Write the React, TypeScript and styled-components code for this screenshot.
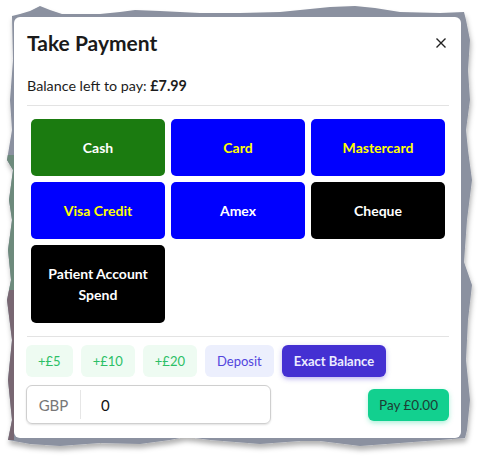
import styled, { createGlobalStyle } from "styled-components";

const GlobalStyle = createGlobalStyle`
  html, body {
    margin: 0;
    padding: 0;
    background: #ffffff;
  }
  body {
    font-family: "Lato", "Noto Sans", sans-serif;
    color: #1c1c1c;
  }
`;

const Page = styled.div`
  position: relative;
  width: 480px;
  height: 456px;
  overflow: hidden;
  padding: 17px 0 0 14px;
  box-sizing: border-box;
`;

const Backdrop = styled.svg`
  position: absolute;
  top: 0;
  left: 0;
`;

const Modal = styled.section`
  position: relative;
  width: 447px;
  height: 421px;
  background: #ffffff;
  border-radius: 6px;
  display: flex;
  flex-direction: column;
`;

const Header = styled.header`
  height: 52px;
  padding: 0 15px 0 13px;
  display: flex;
  align-items: center;
  justify-content: space-between;
`;

const Title = styled.h2`
  margin: 0;
  font-size: 21px;
  font-weight: 700;
  line-height: 24px;
  color: #1a1a1a;
`;

const CloseButton = styled.button`
  border: none;
  background: none;
  padding: 0;
  width: 10px;
  height: 10px;
  display: flex;
  cursor: pointer;
`;

const Body = styled.div`
  padding: 0 12px 0 13px;
`;

const Balance = styled.p`
  margin: 7px 0 0;
  font-size: 14.3px;
  line-height: 20px;

  strong {
    font-weight: 700;
  }
`;

const Divider = styled.hr<{ $gap: number }>`
  margin: ${(p) => p.$gap}px 0 0;
  border: none;
  border-top: 1px solid #e3e3e3;
`;

const MethodGrid = styled.div`
  margin: 13px 4px 0;
  display: grid;
  grid-template-columns: repeat(3, 1fr);
  gap: 6px;
`;

const MethodButton = styled.button<{ $bg: string; $fg: string }>`
  border: none;
  border-radius: 5px;
  padding: 18px 8px;
  line-height: 21px;
  font-family: inherit;
  font-size: 14px;
  font-weight: 700;
  background: ${(p) => p.$bg};
  color: ${(p) => p.$fg};
  cursor: pointer;
`;

const QuickRow = styled.div`
  margin: 8px 0 0 -1px;
  display: flex;
  gap: 8px;
`;

const quickTones = {
  green: { bg: "#eefbf2", fg: "#2cbf66", weight: 400, shadow: "none" },
  soft: { bg: "#eceffd", fg: "#5245dd", weight: 400, shadow: "none" },
  solid: {
    bg: "#4430d2",
    fg: "#ececff",
    weight: 700,
    shadow: "0 2px 5px rgba(68, 48, 210, 0.35)",
  },
};

const QuickButton = styled.button<{ $tone: keyof typeof quickTones }>`
  height: 32px;
  padding: 0 12px;
  border: none;
  border-radius: 6px;
  font-family: inherit;
  font-size: 13px;
  font-weight: ${(p) => quickTones[p.$tone].weight};
  background: ${(p) => quickTones[p.$tone].bg};
  color: ${(p) => quickTones[p.$tone].fg};
  box-shadow: ${(p) => quickTones[p.$tone].shadow};
  cursor: pointer;
`;

const Footer = styled.div`
  margin: 8px 0 0 -1px;
  display: flex;
  align-items: center;
  justify-content: space-between;
`;

const InputGroup = styled.label`
  width: 245px;
  height: 39px;
  box-sizing: border-box;
  border: 1px solid #cfcfcf;
  border-radius: 6px;
  box-shadow: 0 1px 2px rgba(0, 0, 0, 0.12);
  display: flex;
  align-items: stretch;
`;

const Addon = styled.span`
  width: 53px;
  margin: 4px 0;
  border-right: 1px solid #e6e6e6;
  display: flex;
  align-items: center;
  justify-content: center;
  font-size: 15px;
  color: #777777;
`;

const AmountInput = styled.input`
  flex: 1;
  min-width: 0;
  border: none;
  outline: none;
  background: transparent;
  padding: 0 0 0 20px;
  font-family: inherit;
  font-size: 15px;
  color: #111111;
`;

const PayButton = styled.button`
  height: 32px;
  width: 81px;
  padding: 0;
  border: none;
  border-radius: 6px;
  background: #12d08f;
  color: #1d3d34;
  font-family: inherit;
  font-size: 13.5px;
  box-shadow: 0 2px 5px rgba(18, 208, 143, 0.35);
  cursor: pointer;
`;

const methods = [
  { label: "Cash", bg: "#1b7b10", fg: "#ffffff" },
  { label: "Card", bg: "#0000ff", fg: "#ffff00" },
  { label: "Mastercard", bg: "#0000ff", fg: "#ffff00" },
  { label: "Visa Credit", bg: "#0000ff", fg: "#ffff00" },
  { label: "Amex", bg: "#0000ff", fg: "#ffffff" },
  { label: "Cheque", bg: "#000000", fg: "#ffffff" },
  { label: "Patient Account Spend", bg: "#000000", fg: "#ffffff" },
];

const quickAmounts: { label: string; tone: keyof typeof quickTones }[] = [
  { label: "+£5", tone: "green" },
  { label: "+£10", tone: "green" },
  { label: "+£20", tone: "green" },
  { label: "Deposit", tone: "soft" },
  { label: "Exact Balance", tone: "solid" },
];

const tornEdge =
  "M12 16 L20 14 L30 11 L40 6 L50 10 L62 14 L100 14 L120 12 L135 10 L160 11 L200 13 L240 13 L280 12 L310 9 L330 7 L355 6 L375 8 L400 12 L440 13 L464 12 " +
  "L466 20 L470 40 L468 70 L470 100 L466 130 L468 150 L472 180 L467 220 L464 262 L472 285 L468 320 L466 360 L470 400 L467 430 L465 438 " +
  "L440 440 L400 443 L360 446 L320 441 L300 441 L260 444 L210 440 L195 438 L185 437 L170 440 L140 444 L100 443 L60 446 L30 444 L8 440 " +
  "L12 420 L8 380 L12 340 L7 300 L11 280 L8 250 L12 220 L9 200 L13 170 L7 160 L12 130 L10 100 L13 60 Z";

const TornBackdrop = () => (
  <Backdrop width="480" height="456" viewBox="0 0 480 456">
    <defs>
      <filter id="torn-shadow" x="-5%" y="-5%" width="110%" height="115%">
        <feDropShadow dx="1" dy="4" stdDeviation="2.5" floodColor="#000" floodOpacity="0.3" />
      </filter>
      <clipPath id="torn-clip">
        <path d={tornEdge} />
      </clipPath>
    </defs>
    <path d={tornEdge} fill="#8b91a0" filter="url(#torn-shadow)" />
    <g clipPath="url(#torn-clip)">
      <rect x="0" y="155" width="14" height="135" fill="#6d8a7c" />
      <rect x="0" y="290" width="14" height="150" fill="#786772" />
    </g>
  </Backdrop>
);

export default function App() {
  return (
    <Page>
      <GlobalStyle />
      <TornBackdrop />
      <Modal>
        <Header>
          <Title>Take Payment</Title>
          <CloseButton aria-label="Close">
            <svg width="10" height="10" viewBox="0 0 10 10">
              <path d="M0.5 0.5 L9.5 9.5 M9.5 0.5 L0.5 9.5" stroke="#222" strokeWidth="1.4" />
            </svg>
          </CloseButton>
        </Header>
        <Body>
          <Balance>
            Balance left to pay: <strong>£7.99</strong>
          </Balance>
          <Divider $gap={9} />
          <MethodGrid>
            {methods.map((m) => (
              <MethodButton key={m.label} $bg={m.bg} $fg={m.fg}>
                {m.label}
              </MethodButton>
            ))}
          </MethodGrid>
          <Divider $gap={13} />
          <QuickRow>
            {quickAmounts.map((q) => (
              <QuickButton key={q.label} $tone={q.tone}>
                {q.label}
              </QuickButton>
            ))}
          </QuickRow>
          <Footer>
            <InputGroup>
              <Addon>GBP</Addon>
              <AmountInput defaultValue="0" />
            </InputGroup>
            <PayButton>Pay £0.00</PayButton>
          </Footer>
        </Body>
      </Modal>
    </Page>
  );
}
